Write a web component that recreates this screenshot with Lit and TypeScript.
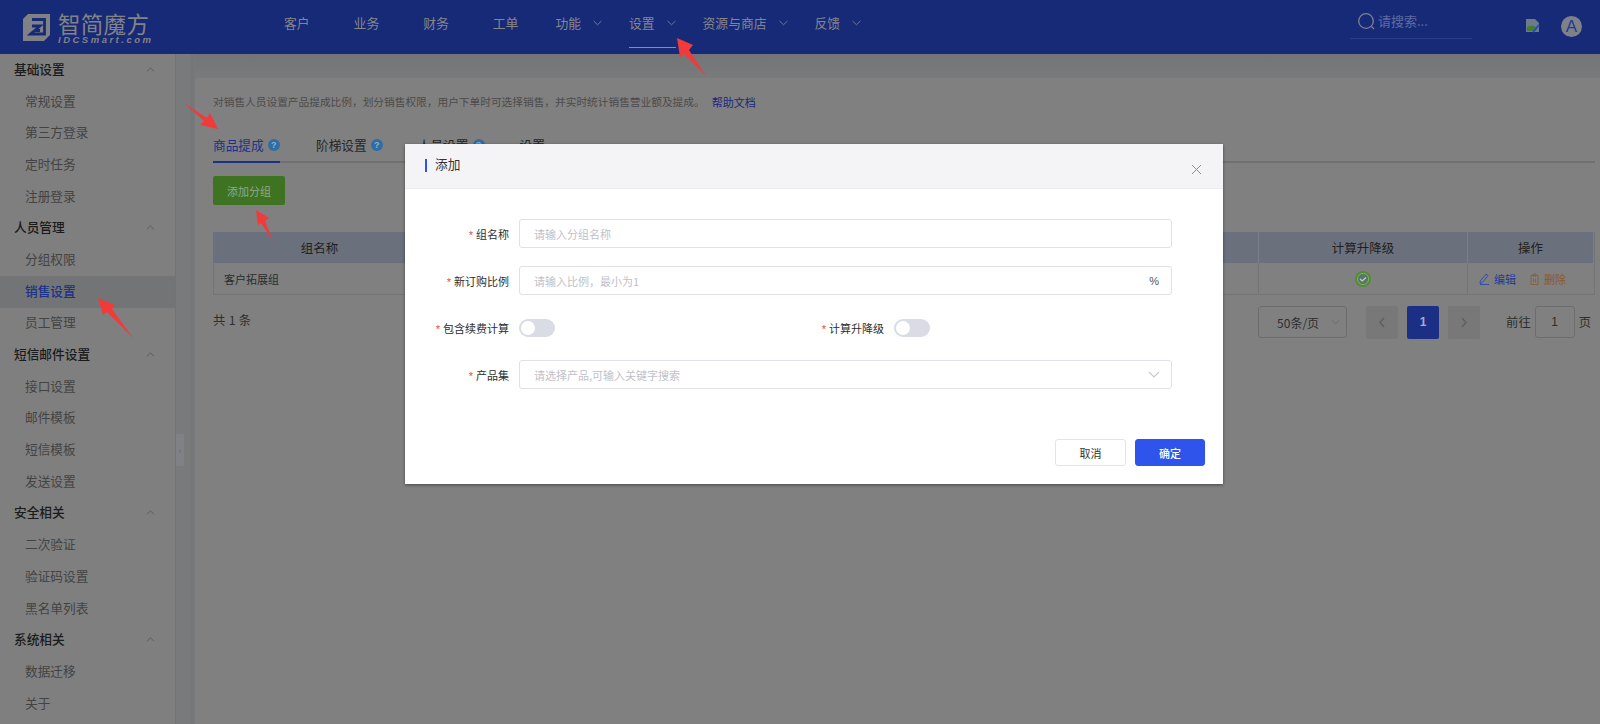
import { LitElement, html, css, svg } from "lit";
import { customElement } from "lit/decorators.js";

const chev = (cls: string) => html`<svg class=${cls} viewBox="0 0 10 6" fill="none"><path d="M.7.8 5 5 9.3.8" stroke="currentColor" stroke-width="1"/></svg>`;

const groups: [string, string[]][] = [
  ["基础设置", ["常规设置", "第三方登录", "定时任务", "注册登录"]],
  ["人员管理", ["分组权限", "销售设置", "员工管理"]],
  ["短信邮件设置", ["接口设置", "邮件模板", "短信模板", "发送设置"]],
  ["安全相关", ["二次验证", "验证码设置", "黑名单列表"]],
  ["系统相关", ["数据迁移", "关于"]],
];

const navs: [string, boolean][] = [
  ["客户", false], ["业务", false], ["财务", false], ["工单", false],
  ["功能", true], ["设置", true], ["资源与商店", true], ["反馈", true],
];

@customElement("app-root")
export class AppRoot extends LitElement {
  static styles = css`
    :host { display: block; position: relative; width: 1600px; height: 724px; overflow: hidden; background: #7f8081;
      font-family: "Noto Sans CJK SC", "Liberation Sans", sans-serif; font-size: 12px; color: #333; }
    .header { height: 54px; background: #172a78; display: flex; align-items: center; position: relative; }
    .logo { width: 262px; flex: none; display: flex; align-items: flex-start; padding: 14px 0 0 23px; box-sizing: border-box; height: 54px; gap: 8px; color: #828385; }
    .logo svg { width: 27px; height: 27px; flex: none; }
    .logo-name { font-size: 22.5px; line-height: 19px; font-weight: 400; letter-spacing: .3px; white-space: nowrap; }
    .logo-en { font: italic 700 9.5px/10px "Liberation Sans", sans-serif; letter-spacing: 2.5px; margin-top: 2px; white-space: nowrap; }
    .nav { display: flex; height: 54px; }
    .nav-item { position: relative; display: flex; align-items: center; padding: 0 12px 9px 15px; gap: 12px; color: #85868b; font-size: 12.8px; }
    .nav-item.plain { padding: 0 22px 9px; }
    .nav-chev { width: 9px; height: 6px; color: #7e8292; }
    .nav-line { position: absolute; left: 15px; right: 12px; bottom: 6px; height: 1px; background: #8c8e96; }
    .right { margin-left: auto; display: flex; align-items: center; }
    .search { width: 122px; height: 26px; margin-top: -2px; border-bottom: 1px solid #2d3f8a; display: flex; align-items: flex-start; gap: 3px; padding-left: 8px; box-sizing: border-box; color: #5e6ca0; font-size: 13px; line-height: 16px; margin-right: 53px; }
    .search svg { width: 17px; height: 18px; flex: none; }
    .broken { width: 15px; height: 15px; margin: -3px 21px 0 0; }
    .avatar { width: 21px; height: 21px; border-radius: 50%; background: #808186; color: #1f3a9a; display: flex; align-items: center; justify-content: center; font: 17px/21px "Liberation Sans", sans-serif; margin: -1px 18px 0 0; }

    .body { display: flex; height: 670px; }
    .side { width: 175px; flex: none; background: #7f7f7f; border-right: 1px solid #717375; }
    .row { height: 31.7px; display: flex; align-items: center; font-size: 12.7px; padding-bottom: 3px; box-sizing: border-box; }
    .row.group { padding: 0 20px 3px 14px; justify-content: space-between; font-weight: 500; color: #1b1b1b; }
    .row.item { padding-left: 25px; color: #434343; }
    .row.item.active { background: #727476; color: #1c318a; font-weight: 500; }
    .group-chev { width: 9px; height: 5px; color: #54585c; transform: rotate(180deg); margin-top: 2px; }
    .handle { position: absolute; left: 176px; top: 434px; width: 8px; height: 32px; background: #7f8186; color: #66686c; display: flex; align-items: center; justify-content: center; font-size: 9px; }
    .gutter { width: 19px; flex: none; background: linear-gradient(90deg, #787a7c 0, #787a7c 13px, #737577 16px, #78797b 19px); }
    .main { flex: 1; display: flex; flex-direction: column; background: linear-gradient(#737577, #787a7b 24px); min-width: 0; }
    .card { flex: 1; margin-top: 24px; background: #808080; padding: 15px 5px 0 18px; border-radius: 3px 0 0 0; min-width: 0; }
    .desc { height: 18px; line-height: 18px; font-size: 10.7px; color: #4b4b4b; display: flex; gap: 7px; white-space: nowrap; }
    .desc a { color: #17297c; font-size: 11px; }
    .tabs { display: flex; margin-top: 19px; border-bottom: 2px solid #6f7072; height: 31px; }
    .tab { display: flex; align-items: center; gap: 2px; height: 31px; font-size: 12.7px; color: #262626; padding-right: 35px; position: relative; padding-bottom: 2px; box-sizing: border-box; white-space: nowrap; }
    .tab.active { color: #1c318a; padding-right: 0; width: 67px; margin-right: 36px; }
    .tab.active::after { content: ""; position: absolute; left: 0; right: 0; bottom: -2px; height: 2px; background: #1c318a; }
    .help { width: 12px; height: 12px; border-radius: 50%; background: #2f6da4; color: #8fb0cc; font: 700 9px/12px "Liberation Sans", sans-serif; text-align: center; flex: none; margin-left: 2px; }
    .add { margin-top: 13px; width: 72px; height: 29px; background: #3e7322; color: #93a88b; border-radius: 2px; display: flex; align-items: center; justify-content: center; font-size: 11px; }
    .table { margin-top: 27px; display: grid; grid-template-columns: 214px 1fr 209px 126px; border-right: 1px solid #747474; }
    .th { height: 31px; background: #6b707d; border-right: 1px solid #7a7e89; display: flex; align-items: center; justify-content: center; font-size: 12.5px; color: #202020; }
    .td { height: 31px; border-bottom: 1px solid #747474; border-right: 1px solid #747474; display: flex; align-items: center; justify-content: center; font-size: 11px; color: #2b2b2b; }
    .td.first { justify-content: flex-start; padding-left: 10px; border-left: 1px solid #747474; }
    .th:last-child, .td:last-child { border-right: 0; }
    .ok { width: 16px; height: 16px; }
    .ops { gap: 4px; justify-content: flex-start; padding-left: 11px; }
    .edit { color: #1f3a9a; } .del { color: #8a5a2e; }
    .ops svg { width: 11px; height: 12px; flex: none; }
    .ops .del-i { margin-left: 9px; }
    .pager { margin-top: 11px; display: flex; align-items: center; height: 32px; font-size: 12px; color: #2e2e2e; }
    .total { flex: none; font-size: 12.3px; letter-spacing: .3px; margin-top: -4px; }
    .select { margin-left: auto; width: 89px; height: 32px; box-sizing: border-box; border: 1px solid #6d6d6d; border-radius: 3px; display: flex; align-items: center; padding: 0 6px 0 18px; justify-content: space-between; font-size: 12px; }
    .select svg { width: 9px; height: 6px; color: #686868; }
    .pg { width: 32px; height: 33px; border-radius: 2px; margin-left: 9px; display: flex; align-items: center; justify-content: center; background: #787878; color: #5f5f5f; font-weight: 700; }
    .pg svg { width: 6px; height: 11px; }
    .pg.first { margin-left: 19px; }
    .pg.cur { background: #1b2f85; color: #a7adc7; font: 700 12px "Liberation Sans", sans-serif; }
    .goto { margin-left: 26px; font-size: 12.3px; }
    .goto-in { margin: 0 4px; width: 40px; height: 32px; box-sizing: border-box; border: 1px solid #6d6d6d; border-radius: 3px; display: flex; align-items: center; justify-content: center; font: 12px "Liberation Sans", sans-serif; }
    .last { font-size: 12.3px; margin-right: 4px; }

    .modal { position: absolute; left: 405px; top: 144px; width: 818px; height: 340px; background: #fff; display: flex; flex-direction: column; box-shadow: 0 1px 3px rgba(0,0,0,.45); }
    .m-head { height: 45px; flex: none; box-sizing: border-box; background: #f4f4f7; border-bottom: 1px solid #ebecf0; display: flex; align-items: center; padding: 0 21px 5px 20px; font-size: 12.7px; color: #333; }
    .bar { width: 2px; height: 13px; background: #2f54eb; margin: 3px 8px 0 0; }
    .close { margin-left: auto; width: 11px; height: 11px; color: #8b8d94; margin-top: 11px; }
    .form { padding-top: 30px; flex: 1; }
    .f-row { display: flex; align-items: center; height: 29px; margin-bottom: 18px; padding-right: 51px; }
    .f-col { display: flex; align-items: center; width: 375px; flex: none; }
    .label { width: 104px; flex: none; text-align: right; font-size: 11px; color: #2e2e2e; margin-right: 10px; white-space: nowrap; }
    .star { color: #e34b4b; margin-right: 3px; font-family: "Liberation Sans", sans-serif; }
    .input { flex: 1; height: 29px; box-sizing: border-box; border: 1px solid #dfe1e8; border-radius: 3px; display: flex; align-items: center; justify-content: space-between; padding: 0 14px; font-size: 11px; color: #bfc1c9; }
    .unit { color: #555; font: 11px "Liberation Sans", sans-serif; margin-right: -2px; }
    .input svg { width: 12px; height: 7px; color: #c2c5cd; margin-right: -3px; }
    .switch { width: 36px; height: 18px; border-radius: 9px; background: #d9dce4; position: relative; flex: none; }
    .switch::after { content: ""; position: absolute; left: 2px; top: 2px; width: 14px; height: 14px; border-radius: 50%; background: #fff; }
    .m-foot { display: flex; justify-content: flex-end; gap: 9px; padding: 0 18px 18px; }
    .btn { width: 71px; height: 27px; box-sizing: border-box; border-radius: 3px; display: flex; align-items: center; justify-content: center; font-size: 11px; border: 1px solid #e3e4e9; color: #333; background: #fff; }
    .btn.primary { background: #2f54eb; border-color: #2f54eb; color: #fff; width: 70px; font-weight: 500; }
    .arrows { position: absolute; left: 0; top: 0; width: 1600px; height: 724px; pointer-events: none; }
  `;

  private field(label: string, placeholder: string, tail: unknown = null) {
    return html`<div class="f-row">
      <div class="label"><span class="star">*</span>${label}</div>
      <div class="input"><span>${placeholder}</span>${tail}</div>
    </div>`;
  }

  render() {
    return html`
      <div class="header">
        <div class="logo">
          <svg viewBox="0 0 27 27"><path d="M5 0h22v21l-6 6H0V5z" fill="#808184"/><path d="M9 5.500h12.500v14.500H7.500l9.500-8H9M12 16.500h5" fill="none" stroke="#172a78" stroke-width="2.800"/></svg>
          <div><div class="logo-name">智简魔方</div><div class="logo-en">IDCSmart.com</div></div>
        </div>
        <div class="nav">
          ${navs.map(([t, a]) => html`<div class="nav-item ${a ? "" : "plain"}">${t}${a ? chev("nav-chev") : ""}${t === "设置" ? html`<div class="nav-line"></div>` : ""}</div>`)}
        </div>
        <div class="right">
          <div class="search">
            <svg viewBox="0 0 17 18" fill="none" stroke="#7e818c" stroke-width="1.300"><circle cx="8" cy="8" r="7.300"/><path d="m13.500 13.500 2.500 2.500"/></svg>
            <span>请搜索...</span>
          </div>
          <svg class="broken" viewBox="0 0 15 15"><path d="M1 1h9l4 4v9H1z" fill="#6f7a88"/><path d="M2 9c3-2 6-2 9 0v4H2z" fill="#3f7f35"/><path d="M8 14 14 7" stroke="#2a50b8" stroke-width="2"/></svg>
          <div class="avatar">A</div>
        </div>
      </div>
      <div class="body">
        <div class="side">
          ${groups.map(([g, items]) => html`
            <div class="row group"><span>${g}</span>${chev("group-chev")}</div>
            ${items.map((i) => html`<div class="row item ${i === "销售设置" ? "active" : ""}">${i}</div>`)}
          `)}
        </div>
        <div class="gutter"></div>
        <div class="main">
          <div class="card">
            <div class="desc"><span>对销售人员设置产品提成比例，划分销售权限，用户下单时可选择销售，并实时统计销售营业额及提成。</span><a>帮助文档</a></div>
            <div class="tabs">
              <div class="tab active">商品提成<span class="help">?</span></div>
              <div class="tab">阶梯设置<span class="help">?</span></div>
              <div class="tab">人员设置<span class="help">?</span></div>
              <div class="tab">设置</div>
            </div>
            <div class="add">添加分组</div>
            <div class="table">
              <div class="th">组名称</div><div class="th"></div><div class="th">计算升降级</div><div class="th">操作</div>
              <div class="td first">客户拓展组</div><div class="td"></div>
              <div class="td"><svg class="ok" viewBox="0 0 16 16"><circle cx="8" cy="8" r="8" fill="#4f8f28"/><circle cx="8" cy="8" r="5.600" fill="#587668" stroke="#93b08c" stroke-width=".8"/><path d="m5 8 2.200 2 3.800-3.500" fill="none" stroke="#c4d0c4" stroke-width="1.200"/></svg></div>
              <div class="td ops">
                <svg viewBox="0 0 11 12" fill="none" stroke="#2c47a8"><path d="M7 1 9 2.500 3.500 9.500 1 10.500 1.300 8zM1 11.500h9" stroke-width=".9"/></svg><span class="edit">编辑</span>
                <svg class="del-i" viewBox="0 0 11 12" fill="none" stroke="#8a5f35"><path d="M2 2.500h7v9H2zM4 1h3v2H4zM4.500 5.500v4M6.500 5.500v4" stroke-width=".9"/></svg><span class="del">删除</span>
              </div>
            </div>
            <div class="pager">
              <div class="total">共 1 条</div>
              <div class="select"><span>50条/页</span>${chev("")}</div>
              <div class="pg first"><svg viewBox="0 0 6 11" fill="none" stroke="currentColor" stroke-width="1.500"><path d="M5 1 1 5.500 5 10"/></svg></div>
              <div class="pg cur">1</div>
              <div class="pg"><svg viewBox="0 0 6 11" fill="none" stroke="currentColor" stroke-width="1.500"><path d="m1 1 4 4.500L1 10"/></svg></div>
              <div class="goto">前往</div>
              <div class="goto-in">1</div>
              <div class="last">页</div>
            </div>
          </div>
        </div>
      </div>
      <div class="handle">‹</div>

      <div class="modal">
        <div class="m-head"><span class="bar"></span>添加
          <svg class="close" viewBox="0 0 11 11" fill="none" stroke="currentColor" stroke-width="1"><path d="m1 1 9 9M10 1l-9 9"/></svg>
        </div>
        <div class="form">
          ${this.field("组名称", "请输入分组名称")}
          ${this.field("新订购比例", "请输入比例，最小为1", html`<span class="unit">%</span>`)}
          <div class="f-row">
            <div class="f-col"><div class="label"><span class="star">*</span>包含续费计算</div><div class="switch"></div></div>
            <div class="f-col"><div class="label"><span class="star">*</span>计算升降级</div><div class="switch"></div></div>
          </div>
          ${this.field("产品集", "请选择产品,可输入关键字搜索", chev(""))}
        </div>
        <div class="m-foot"><div class="btn">取消</div><div class="btn primary">确定</div></div>
      </div>

      <svg class="arrows" viewBox="0 0 1600 724" fill="#f23a3a">
        ${svg`<polygon points="184,103 207,118 210,113 218,129 200,125 204,121"/>
        <polygon points="677,38 693,45 689,50 706,76 684,54 680,57"/>
        <polygon points="256,210 269,218 265,221 273,241 261,223 258,225"/>
        <polygon points="98,298 115,305 112,309 133,338 107,312 103,315"/>`}
      </svg>
    `;
  }
}
